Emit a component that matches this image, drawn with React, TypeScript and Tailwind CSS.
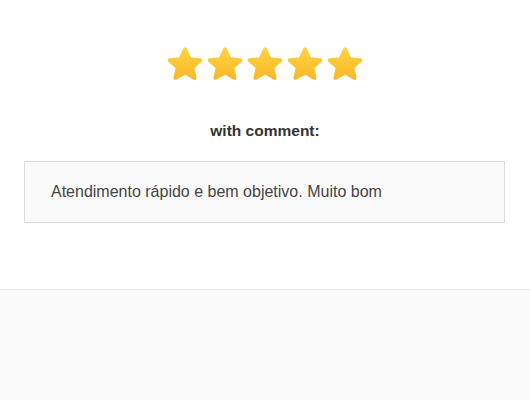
import React from "react"

function Star({ id }: { id: string }) {
  return (
    <svg width="38" height="36" viewBox="0 0 38 36">
      <defs>
        <linearGradient id={id} x1="0" y1="0" x2="0" y2="1">
          <stop offset="0%" stopColor="#FFD23F" />
          <stop offset="100%" stopColor="#F9B92A" />
        </linearGradient>
      </defs>
      <polygon
        points="19,3 23.8,12.9 34.6,14.1 26.6,21.5 28.8,32.2 19,26.8 9.2,32.2 11.4,21.5 3.4,14.1 14.2,12.9"
        fill={`url(#${id})`}
        stroke={`url(#${id})`}
        strokeWidth="3.5"
        strokeLinejoin="round"
      />
    </svg>
  )
}

export default function App() {
  return (
    <div className="h-screen overflow-hidden bg-white" style={{ fontFamily: '"Liberation Sans", Arial, sans-serif' }}>
      <div className="pt-[46px] pb-[66px]">
        <div className="flex justify-center gap-[2px]">
          {[0, 1, 2, 3, 4].map((i) => (
            <Star key={i} id={`g${i}`} />
          ))}
        </div>
        <div className="mt-[39px] text-center text-[15.5px] leading-[20px] font-bold text-[#333]">with comment:</div>
        <div className="ml-[24px] w-[481px] mt-[20px] h-[62px] flex items-center border border-[#dddddd] bg-[#fafafa] px-[26px] text-[16px] text-[#444]">
          Atendimento rápido e bem objetivo. Muito bom
        </div>
      </div>
      <div className="border-t border-[#ececec] bg-[#fafafa] h-full" />
    </div>
  )
}
